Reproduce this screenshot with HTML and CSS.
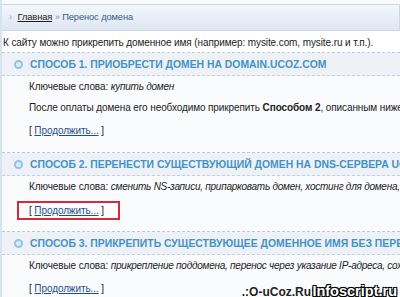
FILE: index.html
```html
<!DOCTYPE html>
<html lang="ru">
<head>
  <meta charset="UTF-8">
  <title>Перенос домена</title>
  <link rel="stylesheet" href="styles.css">
</head>
<body>
<div class="page">
  <div class="crumbs">
    <span class="arrow">›</span>
    <a href="#" class="home">Главная</a> <span class="sep">»</span> <span class="current">Перенос домена</span>
  </div>

  <p class="intro">К сайту можно прикрепить доменное имя (например: mysite.com, mysite.ru и т.п.).</p>

  <div class="method">
    <h3><span class="dot"></span>Способ 1. Приобрести домен на domain.ucoz.com</h3>
    <div class="body">
      <p>Ключевые слова: <i>купить домен</i></p>
      <p>После оплаты домена его необходимо прикрепить <b>Способом 2</b>, описанным ниже.</p>
      <p class="more">[ <a href="#">Продолжить...</a> ]</p>
    </div>
  </div>

  <div class="method">
    <h3><span class="dot"></span>Способ 2. Перенести существующий домен на DNS-сервера uCoz</h3>
    <div class="body">
      <p>Ключевые слова: <i>сменить NS-записи, припарковать домен, хостинг для домена, сменить DNS</i></p>
      <p class="more marked">[ <a href="#">Продолжить...</a> ]</p>
    </div>
  </div>

  <div class="method">
    <h3><span class="dot"></span>Способ 3. Прикрепить существующее доменное имя без переноса</h3>
    <div class="body">
      <p>Ключевые слова: <i>прикрепление поддомена, перенос через указание IP-адреса, сохранить почту</i></p>
      <p class="more">[ <a href="#">Продолжить...</a> ]</p>
    </div>
  </div>

  <div class="stamp">
    <span class="small">.:O-uCoz.Ru:.</span>
    <span class="big">Infoscript.ru</span>
  </div>
</div>
</body>
</html>
```

FILE: styles.css
```css
body {
  margin: 0;
  font-family: "Liberation Sans", Arial, sans-serif;
  font-size: 10px;
  letter-spacing: -0.1px;
  color: #222;
  background: #fff;
  overflow: hidden;
}

.page {
  position: relative;
  height: 297px;
  overflow: hidden;
  border-left: 2px solid #d6e3f1;
  padding-top: 4px;
  background: #fafbfd;
}

.crumbs {
  height: 25px;
  line-height: 25px;
  padding-left: 7px;
  border: 1px solid #cbd8e7;
  border-left: none;
  background: linear-gradient(#f4f7fb, #dde6f1);
  color: #3c5b8c;
  font-size: 9.3px;
  white-space: nowrap;
}

.crumbs .arrow {
  color: #8a9bb5;
  margin-right: 3px;
}

.crumbs .home {
  color: #1a1a1a;
}

.crumbs .sep {
  color: #7a8fb0;
}

.intro {
  margin: 0;
  padding: 5px 0 3px 1px;
  line-height: 13px;
  background: #fff;
  white-space: nowrap;
}

.method {
  border-top: 1px dashed #b9c9da;
}

.method h3 {
  margin: 0;
  height: 22px;
  display: flex;
  align-items: center;
  padding-left: 12px;
  border-bottom: 1px dashed #c3d2e2;
  background: #eef2f7;
  color: #4392c6;
  font-size: 10.4px;
  font-weight: bold;
  letter-spacing: 0;
  text-transform: uppercase;
  white-space: nowrap;
}

.dot {
  width: 5px;
  height: 5px;
  border: 2px solid #8fc3e8;
  border-radius: 50%;
  background: #dcecf8;
  margin-right: 7px;
  flex: none;
}

.body {
  padding: 4px 0 15px 27px;
  white-space: nowrap;
}

.body p {
  margin: 0 0 8px;
  line-height: 13px;
}

.body i {
  letter-spacing: -0.25px;
}

.body p.more {
  margin: 10px 0 0;
}

.more a {
  color: #1f4f8f;
}

.body p.marked {
  display: inline-block;
  margin: 0 0 -4px -12px;
  padding: 1px 14px 1px 10px;
  border: 2px solid #d32a3a;
}

.stamp {
  position: absolute;
  right: 3px;
  bottom: 2px;
  display: flex;
  align-items: baseline;
  font-family: "Liberation Sans", sans-serif;
  font-weight: bold;
  letter-spacing: 0;
}

.stamp .small {
  font-size: 12px;
  color: #222;
  text-shadow: 0 0 2px #fff, 0 0 2px #fff;
  margin-right: -6px;
}

.stamp .big {
  font-size: 14.5px;
  color: #fff;
  text-shadow: -1px -1px 0 #000, 1px -1px 0 #000, -1px 1px 0 #000, 1px 1px 0 #000, 0 0 2px #000;
}
```
